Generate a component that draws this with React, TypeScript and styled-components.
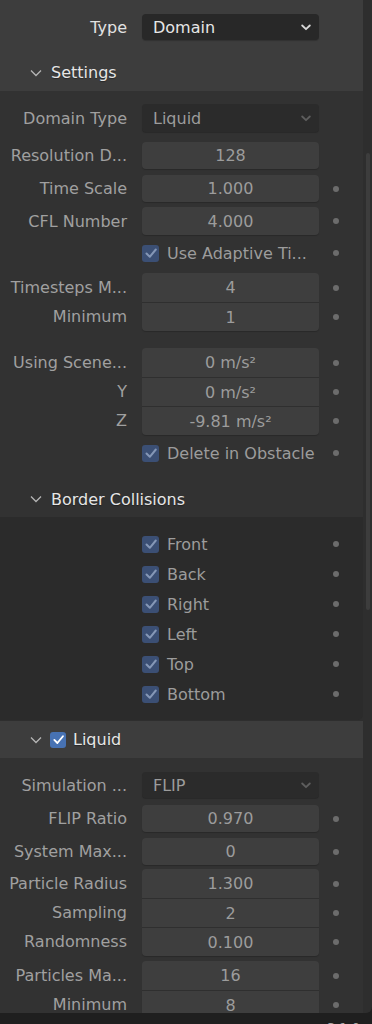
import React from "react";
import styled, { createGlobalStyle } from "styled-components";

const GlobalStyle = createGlobalStyle`
  html, body {
    margin: 0;
    padding: 0;
    background: #1f1f1f;
  }
  body {
    font-family: "DejaVu Sans", "Liberation Sans", sans-serif;
    font-size: 16px;
  }
`;

const Screen = styled.div`
  width: 372px;
  height: 1024px;
  display: flex;
  flex-direction: column;
  overflow: hidden;
  background: #1f1f1f;
`;

const Editor = styled.div`
  flex: 0 0 1013px;
  display: flex;
  align-items: flex-start;
  overflow: hidden;
  background: #2e2e2e;
  border-bottom-right-radius: 6px;
`;

const Column = styled.div`
  width: 363px;
  flex-shrink: 0;
  display: flex;
  flex-direction: column;
  & > * {
    flex-shrink: 0;
  }
`;

const ScrollTrack = styled.div`
  flex: 1;
  padding: 153px 0 0 3px;
`;

const Thumb = styled.div`
  width: 4px;
  height: 457px;
  border-radius: 2px;
  background: #3d3d3d;
`;

const StatusBar = styled.div`
  flex: 1;
  display: flex;
  justify-content: flex-end;
  padding: 7px 12px 0 0;
  color: #a8a8a8;
  font-size: 13px;
  overflow: hidden;
`;

const TopArea = styled.div`
  background: #3d3d3d;
  padding-top: 14px;
  height: 54px;
  box-sizing: border-box;
`;

const Header = styled.div<{ $bg: string; $h: number; $mt?: number }>`
  height: ${(p) => p.$h}px;
  margin-top: ${(p) => p.$mt ?? 0}px;
  background: ${(p) => p.$bg};
  display: flex;
  align-items: center;
  padding-left: 30px;
  color: #e6e6e6;
  text-shadow: 0 1px 1px rgba(0, 0, 0, 0.35);
`;

const HeaderText = styled.span`
  margin-left: 9px;
`;

const HeaderCheckText = styled.span`
  margin-left: 7px;
`;

const Body = styled.div<{ $bg: string; $pt: number; $pb: number; $round?: boolean }>`
  background: ${(p) => p.$bg};
  padding: ${(p) => p.$pt}px 0 ${(p) => p.$pb}px;
  border-bottom-right-radius: ${(p) => (p.$round ? "5px" : "0")};
  display: flex;
  flex-direction: column;
`;

const Group = styled.div<{ $mt: number }>`
  margin-top: ${(p) => p.$mt}px;
  display: flex;
  flex-direction: column;
`;

const Row = styled.div<{ $h: number; $mt?: number }>`
  height: ${(p) => p.$h}px;
  margin-top: ${(p) => p.$mt ?? 0}px;
  display: flex;
  align-items: stretch;
`;

const Label = styled.div<{ $bright?: boolean }>`
  width: 127px;
  flex-shrink: 0;
  margin-right: 15px;
  text-align: right;
  white-space: nowrap;
  display: flex;
  align-items: center;
  justify-content: flex-end;
  color: ${(p) => (p.$bright ? "#e2e2e2" : "#a0a0a0")};
`;

type Pos = "single" | "top" | "mid" | "bottom";

const radius = (pos: Pos) => {
  if (pos === "single") return "4px";
  if (pos === "top") return "4px 4px 0 0";
  if (pos === "bottom") return "0 0 4px 4px";
  return "0";
};

const Field = styled.div<{ $pos: Pos }>`
  width: 177px;
  flex-shrink: 0;
  box-sizing: border-box;
  background: #3e3e3e;
  border-radius: ${(p) => radius(p.$pos)};
  border-top: ${(p) => (p.$pos === "mid" || p.$pos === "bottom" ? "1px solid #2f2f2f" : "none")};
  box-shadow: ${(p) => (p.$pos === "single" || p.$pos === "bottom" ? "0 1px 1px rgba(0,0,0,0.18)" : "none")};
  display: flex;
  align-items: center;
  justify-content: center;
  color: #9c9c9c;
`;

const Menu = styled.div<{ $bright?: boolean }>`
  width: 177px;
  flex-shrink: 0;
  box-sizing: border-box;
  border-radius: 4px;
  background: ${(p) => (p.$bright ? "#282828" : "#2b2b2b")};
  box-shadow: 0 1px 1px rgba(0, 0, 0, 0.2);
  display: flex;
  align-items: center;
  justify-content: space-between;
  padding: 0 8px 0 11px;
  color: ${(p) => (p.$bright ? "#e6e6e6" : "#9c9c9c")};
`;

const Dot = styled.div`
  width: 6px;
  height: 6px;
  border-radius: 50%;
  background: #6c6c6c;
  align-self: center;
  margin-left: 14px;
`;

const CheckRow = styled.div<{ $h: number; $mt?: number }>`
  height: ${(p) => p.$h}px;
  margin-top: ${(p) => p.$mt ?? 0}px;
  display: flex;
  align-items: center;
  padding-left: 142px;
`;

const CheckText = styled.span`
  width: 152px;
  margin-left: 8px;
  color: #9c9c9c;
  white-space: nowrap;
`;

const Box = styled.div<{ $bright?: boolean; $size: number; $ml?: number }>`
  width: ${(p) => p.$size}px;
  height: ${(p) => p.$size}px;
  margin-left: ${(p) => p.$ml ?? 0}px;
  flex-shrink: 0;
  border-radius: 3px;
  background: ${(p) => (p.$bright ? "#4772b3" : "#3b4f74")};
  display: flex;
  align-items: center;
  justify-content: center;
  color: ${(p) => (p.$bright ? "#ffffff" : "#8597b6")};
`;

const Chevron = ({ color = "#b5b5b5" }: { color?: string }) => (
  <svg width="12" height="8" viewBox="0 0 12 8">
    <path d="M1 1.5 L6 6.5 L11 1.5" fill="none" stroke={color} strokeWidth="1.3" />
  </svg>
);

const MenuArrow = ({ color }: { color: string }) => (
  <svg width="10" height="7" viewBox="0 0 10 7">
    <path d="M1.2 1.5 L5 5.2 L8.8 1.5" fill="none" stroke={color} strokeWidth="1.8" strokeLinecap="round" strokeLinejoin="round" />
  </svg>
);

const Check = ({ size }: { size: number }) => (
  <svg width={size - 3} height={size - 3} viewBox="0 0 14 14">
    <path d="M2.5 7.5 L5.8 10.8 L11.8 3.5" fill="none" stroke="currentColor" strokeWidth="2" strokeLinecap="round" strokeLinejoin="round" />
  </svg>
);

type Item = { label: string; value: string; dot?: boolean };

const NumRow = ({ item, pos, h, mt }: { item: Item; pos: Pos; h: number; mt?: number }) => (
  <Row $h={h} $mt={mt}>
    <Label>{item.label}</Label>
    <Field $pos={pos}>{item.value}</Field>
    {item.dot !== false && <Dot />}
  </Row>
);

const NumGroup = ({ items, mt }: { items: Item[]; mt: number }) => (
  <Group $mt={mt}>
    {items.map((it, i) => (
      <NumRow
        key={it.label + i}
        item={it}
        h={29}
        pos={i === 0 ? "top" : i === items.length - 1 ? "bottom" : "mid"}
      />
    ))}
  </Group>
);

const CheckItem = ({ text, h, mt }: { text: string; h: number; mt?: number }) => (
  <CheckRow $h={h} $mt={mt}>
    <Box $size={17}>
      <Check size={17} />
    </Box>
    <CheckText>{text}</CheckText>
    <Dot />
  </CheckRow>
);

const borders = ["Front", "Back", "Right", "Left", "Top", "Bottom"];

export default function App() {
  return (
    <>
      <GlobalStyle />
      <Screen>
        <Editor>
          <Column>
            <TopArea>
              <Row $h={26}>
                <Label $bright>Type</Label>
                <Menu $bright>
                  <span>Domain</span>
                  <MenuArrow color="#d8d8d8" />
                </Menu>
              </Row>
            </TopArea>

            <Header $bg="#3d3d3d" $h={37}>
              <Chevron />
              <HeaderText>Settings</HeaderText>
            </Header>

            <Body $bg="#323232" $pt={13} $pb={15}>
              <Row $h={28}>
                <Label>Domain Type</Label>
                <Menu>
                  <span>Liquid</span>
                  <MenuArrow color="#5e5e5e" />
                </Menu>
              </Row>
              <NumRow item={{ label: "Resolution D...", value: "128", dot: false }} pos="single" h={27} mt={10} />
              <NumRow item={{ label: "Time Scale", value: "1.000" }} pos="single" h={27} mt={6} />
              <NumRow item={{ label: "CFL Number", value: "4.000" }} pos="single" h={28} mt={5} />
              <CheckItem text="Use Adaptive Ti..." h={26} mt={5} />
              <NumGroup
                mt={7}
                items={[
                  { label: "Timesteps M...", value: "4" },
                  { label: "Minimum", value: "1" },
                ]}
              />
              <NumGroup
                mt={17}
                items={[
                  { label: "Using Scene...", value: "0 m/s²" },
                  { label: "Y", value: "0 m/s²" },
                  { label: "Z", value: "-9.81 m/s²" },
                ]}
              />
              <CheckItem text="Delete in Obstacle" h={26} mt={5} />
            </Body>

            <Header $bg="#323232" $h={36}>
              <Chevron />
              <HeaderText>Border Collisions</HeaderText>
            </Header>

            <Body $bg="#2b2b2b" $pt={12} $pb={11} $round>
              {borders.map((b) => (
                <CheckItem key={b} text={b} h={30} />
              ))}
            </Body>

            <Header $bg="#3d3d3d" $h={37} $mt={1}>
              <Chevron />
              <Box $bright $size={16} $ml={8}>
                <Check size={16} />
              </Box>
              <HeaderCheckText>Liquid</HeaderCheckText>
            </Header>

            <Body $bg="#323232" $pt={14} $pb={0}>
              <Row $h={26}>
                <Label>Simulation ...</Label>
                <Menu>
                  <span>FLIP</span>
                  <MenuArrow color="#5e5e5e" />
                </Menu>
              </Row>
              <NumRow item={{ label: "FLIP Ratio", value: "0.970" }} pos="single" h={27} mt={7} />
              <NumRow item={{ label: "System Max...", value: "0" }} pos="single" h={27} mt={6} />
              <NumGroup
                mt={4}
                items={[
                  { label: "Particle Radius", value: "1.300" },
                  { label: "Sampling", value: "2" },
                  { label: "Randomness", value: "0.100" },
                ]}
              />
              <NumGroup
                mt={5}
                items={[
                  { label: "Particles Ma...", value: "16" },
                  { label: "Minimum", value: "8" },
                ]}
              />
            </Body>
          </Column>
          <ScrollTrack>
            <Thumb />
          </ScrollTrack>
        </Editor>
        <StatusBar>3.1.0</StatusBar>
      </Screen>
    </>
  );
}
